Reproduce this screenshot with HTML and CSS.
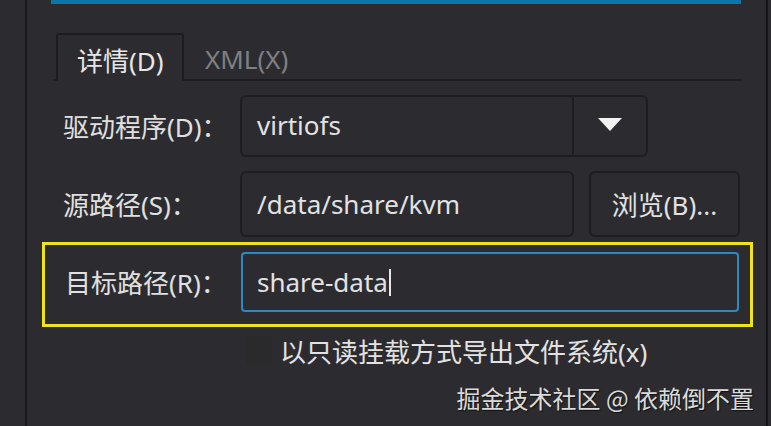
FILE: index.html
```html
<!DOCTYPE html>
<html lang="zh-CN">
<head>
<meta charset="utf-8">
<title>文件系统</title>
<link rel="stylesheet" href="styles.css">
</head>
<body>
  <div class="side-left"></div>
  <main class="main">
    <div class="progress"></div>
    <div class="tabs">
      <div class="tab active">详情(D)</div>
      <div class="tab">XML(X)</div>
    </div>
    <div class="form">
      <div class="row row-driver">
        <div class="label">驱动程序(D)：</div>
        <div class="combo">
          <div class="combo-text">virtiofs</div>
          <div class="combo-btn">
            <svg width="24" height="13" viewBox="0 0 24 13"><polygon points="0,0 24,0 12,13" fill="#f2f2f2"/></svg>
          </div>
        </div>
      </div>
      <div class="row row-source">
        <div class="label">源路径(S)：</div>
        <div class="input source-input">/data/share/kvm</div>
        <div class="button">浏览(B)...</div>
      </div>
      <div class="row row-target">
        <div class="label">目标路径(R)：</div>
        <div class="input target-input">share-data<span class="caret"></span></div>
      </div>
      <div class="row row-check">
        <div class="checkbox"></div>
        <div class="check-label">以只读挂载方式导出文件系统(x)</div>
      </div>
    </div>
    <div class="highlight"></div>
    <div class="watermark">掘金技术社区 @ 依赖倒不置</div>
  </main>
  <div class="side-right"></div>
</body>
</html>
```

FILE: styles.css
```css
html, body {
  margin: 0;
  padding: 0;
}
body {
  width: 771px;
  height: 426px;
  overflow: hidden;
  background: #2c2c30;
  display: flex;
  font-family: "Noto Sans", "Noto Sans CJK SC", sans-serif;
  color: #e2e2e2;
}
.side-left {
  width: 25px;
  border-right: 2px solid #1a1a1d;
  flex: none;
}
.side-right {
  width: 3px;
  border-left: 2px solid #151517;
  flex: none;
}
.main {
  flex: 1;
  position: relative;
  display: flex;
  flex-direction: column;
}
.progress {
  margin-left: 24px;
  width: 690px;
  height: 4px;
  background: #0a77aa;
}
.tabs {
  margin-top: 29px;
  margin-left: 26px;
  width: 688px;
  height: 46px;
  display: flex;
  border-bottom: 2px solid #1d1d20;
}
.tab {
  font-size: 26px;
  color: #7f7f83;
  padding: 9px 0 0 21px;
  line-height: 34px;
}
.tab.active {
  margin-left: 3px;
  box-sizing: border-box;
  border: 2px solid #1d1d20;
  border-bottom: none;
  border-radius: 3px 3px 0 0;
  background: #2c2c30;
  margin-bottom: -2px;
  height: 48px;
  color: #e6e6e6;
  padding-left: 19px;
  width: 128px;
}
.form {
  margin-left: 36px;
  display: flex;
  flex-direction: column;
}
.row {
  display: flex;
  align-items: center;
}
.label {
  width: 177px;
  flex: none;
  font-size: 26px;
  color: #e0e0e0;
}
.row-driver {
  margin-top: 14px;
  height: 62px;
}
.combo {
  width: 408px;
  height: 62px;
  box-sizing: border-box;
  border: 2px solid #1e1e21;
  border-radius: 6px;
  display: flex;
}
.combo-text {
  flex: 1;
  font-size: 26px;
  padding-left: 15px;
  line-height: 56px;
  border-right: 2px solid #1e1e21;
}
.combo-btn {
  width: 72px;
  display: flex;
  align-items: center;
  justify-content: center;
  padding-bottom: 4px;
}
.row-source {
  margin-top: 14px;
  height: 66px;
}
.input {
  height: 66px;
  box-sizing: border-box;
  border: 2px solid #1e1e21;
  border-radius: 6px;
  font-size: 26px;
  padding-left: 15px;
  display: flex;
  align-items: center;
}
.source-input {
  width: 334px;
}
.button {
  margin-left: 15px;
  width: 151px;
  height: 66px;
  box-sizing: border-box;
  border: 2px solid #1e1e21;
  border-radius: 6px;
  font-size: 26px;
  display: flex;
  align-items: center;
  justify-content: center;
}
.row-target {
  margin-top: 15px;
  height: 60px;
}
.row-target .label {
  width: 178px;
  padding-left: 2px;
  box-sizing: border-box;
}
.target-input {
  width: 498px;
  height: 60px;
  border: 2px solid #2b8ac2;
  border-radius: 4px;
  padding-left: 14px;
}
.caret {
  display: inline-block;
  width: 2px;
  height: 27px;
  margin-left: 1px;
  background: #e8e8e8;
}
.row-check {
  margin-top: 24px;
  height: 29px;
}
.checkbox {
  margin-left: 183px;
  width: 26px;
  height: 29px;
  background: #2a2a2d;
  border-radius: 2px;
}
.check-label {
  margin-left: 8px;
  font-size: 26px;
  color: #e2e2e2;
}
.highlight {
  position: absolute;
  left: 15px;
  top: 242px;
  width: 711px;
  height: 85px;
  box-sizing: border-box;
  border: 3px solid #f1e31b;
}
.watermark {
  position: absolute;
  right: 12px;
  top: 380px;
  font-size: 24px;
  color: #dadada;
  text-shadow: 1px 1px 1px #111;
  font-family: "Noto Sans CJK SC", sans-serif;
}
```
